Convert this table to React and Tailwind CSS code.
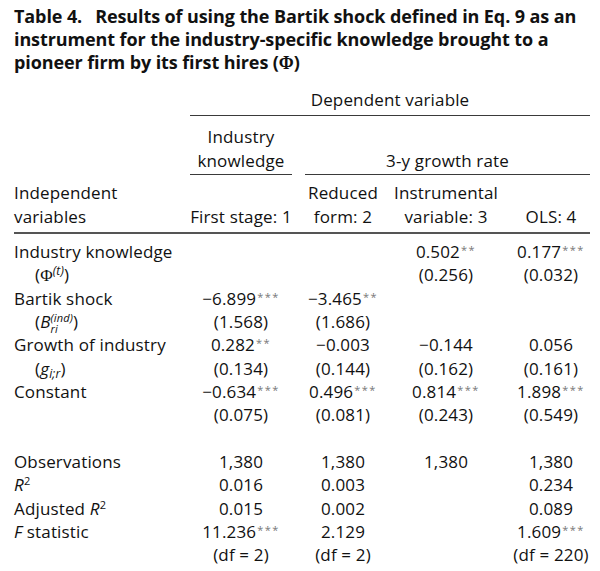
import React from 'react'

const Stars = ({ n }) => (
  <span className="relative -top-[4px] ml-[1px] text-[11px] tracking-[1.5px] text-[#777]">{n}</span>
)

const Num = ({ v }) => {
  if (!v) return <div />
  if (Array.isArray(v)) {
    return (
      <div className="text-center whitespace-nowrap">
        {v[0]}
        <Stars n={v[1]} />
      </div>
    )
  }
  return <div className="text-center whitespace-nowrap">{v}</div>
}

const Phi = () => <span className="font-['Liberation_Serif',serif]">Φ</span>

const rows = [
  { label: 'Industry knowledge', cells: ['', '', ['0.502', '**'], ['0.177', '***']] },
  {
    label: (
      <>
        (<Phi />
        <span className="relative -top-[6px] text-[12px] italic">(t)</span>)
      </>
    ),
    indent: true,
    cells: ['', '', '(0.256)', '(0.032)'],
  },
  { label: 'Bartik shock', cells: [['−6.899', '***'], ['−3.465', '**'], '', ''] },
  {
    label: (
      <>
        (<i>B</i>
        <span className="inline-flex flex-col align-[6px] text-[11px] leading-[11px] italic">
          <span>(ind)</span>
          <span>ri</span>
        </span>
        )
      </>
    ),
    indent: true,
    cells: ['(1.568)', '(1.686)', '', ''],
  },
  { label: 'Growth of industry', cells: [['0.282', '**'], '−0.003', '−0.144', '0.056'] },
  {
    label: (
      <>
        (<i>g</i>
        <span className="relative top-[3px] text-[12px] italic">i;r</span>)
      </>
    ),
    indent: true,
    cells: ['(0.134)', '(0.144)', '(0.162)', '(0.161)'],
  },
  { label: 'Constant', cells: [['−0.634', '***'], ['0.496', '***'], ['0.814', '***'], ['1.898', '***']] },
  { label: '', cells: ['(0.075)', '(0.081)', '(0.243)', '(0.549)'] },
  { label: '', cells: ['', '', '', ''] },
  { label: 'Observations', cells: ['1,380', '1,380', '1,380', '1,380'] },
  {
    label: (
      <>
        <i>R</i>
        <span className="relative -top-[6px] text-[11px]">2</span>
      </>
    ),
    cells: ['0.016', '0.003', '', '0.234'],
  },
  {
    label: (
      <>
        Adjusted <i>R</i>
        <span className="relative -top-[6px] text-[11px]">2</span>
      </>
    ),
    cells: ['0.015', '0.002', '', '0.089'],
  },
  {
    label: (
      <>
        <i>F</i> statistic
      </>
    ),
    cells: [['11.236', '***'], '2.129', '', ['1.609', '***']],
  },
  { label: '', cells: ['(df = 2)', '(df = 2)', '', '(df = 220)'] },
]

export default function App() {
  return (
    <div className="w-[600px] h-[571px] overflow-hidden bg-white text-[#111] font-['Open_Sans',sans-serif]">
      {/* Caption */}
      <h1 className="pl-[14px] pt-[5px] text-[18px] font-bold leading-[23px] tracking-[-0.1px] whitespace-nowrap">
        Table 4.<span className="pl-[13px]">Results of using the Bartik shock defined in Eq. 9 as an</span>
        <br />
        instrument for the industry-specific knowledge brought to a
        <br />
        pioneer firm by its first hires (<Phi />)
      </h1>

      {/* Column headers */}
      <div className="mt-[13px] pl-[14px] grid grid-cols-[176px_102px_102px_104px_106px] text-[17px] leading-[23.33px] tracking-[0.15px]">
        <div className="col-start-2 col-span-4 pr-[14px]">
          <div className="text-center">Dependent variable</div>
          <div className="mt-[3.5px] h-[1.5px] bg-[#3a3a3a]" />
        </div>

        <div className="col-start-2 mt-[9px]">
          <div className="text-center">Industry</div>
          <div className="text-center">knowledge</div>
          <div className="mt-[2px] h-[1.5px] bg-[#3a3a3a]" />
        </div>
        <div className="col-span-3 mt-[9px] pl-[13px] pr-[14px] flex flex-col">
          <div className="mt-auto text-center">3-y growth rate</div>
          <div className="mt-[2px] h-[1.5px] bg-[#3a3a3a]" />
        </div>

        <div className="col-start-1 mt-[6px]">
          <div>Independent</div>
          <div>variables</div>
        </div>
        <div className="mt-[6px] flex flex-col justify-end text-center whitespace-nowrap">First stage: 1</div>
        <div className="mt-[6px] text-center">
          <div>Reduced</div>
          <div>form: 2</div>
        </div>
        <div className="mt-[6px] text-center">
          <div>Instrumental</div>
          <div>variable: 3</div>
        </div>
        <div className="mt-[6px] flex flex-col justify-end text-center">OLS: 4</div>

        <div className="col-span-5 mr-[14px] mt-[4px] h-[2px] bg-[#555]" />
      </div>

      {/* Body */}
      <div className="mt-[6px] pl-[14px] grid grid-cols-[176px_102px_102px_104px_106px] auto-rows-[23.33px] text-[17px] leading-[23.33px] tracking-[0.15px]">
        {rows.map((r, i) => (
          <React.Fragment key={i}>
            <div className={`whitespace-nowrap ${r.indent ? 'pl-[21px]' : ''}`}>{r.label}</div>
            {r.cells.map((c, j) => (
              <Num key={j} v={c} />
            ))}
          </React.Fragment>
        ))}
      </div>
    </div>
  )
}
